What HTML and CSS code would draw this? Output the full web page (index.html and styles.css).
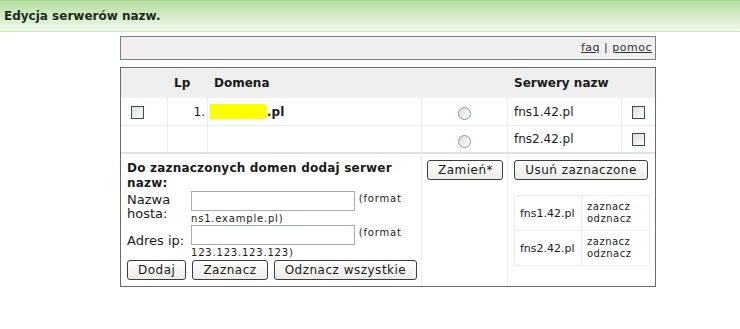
FILE: index.html
```html
<!DOCTYPE html>
<html lang="pl">
<head>
  <meta charset="UTF-8">
  <title>Edycja serwerów nazw</title>
  <link rel="stylesheet" href="styles.css">
</head>
<body>
  <div class="bar">
    <h1>Edycja serwerów nazw.</h1>
  </div>

  <div class="wrap">
    <div class="tools">
      <a href="#">faq</a> | <a href="#">pomoc</a>
    </div>

    <table class="dns">
      <tr class="head">
        <th class="c-chk"></th>
        <th class="c-lp">Lp</th>
        <th class="c-dom">Domena</th>
        <th class="c-rad"></th>
        <th class="c-srv">Serwery nazw</th>
        <th class="c-del"></th>
      </tr>
      <tr>
        <td class="first"><input type="checkbox" class="chk"></td>
        <td class="num">1.</td>
        <td class="domain"><span class="mask"></span><b>.pl</b></td>
        <td class="mid"><input type="radio" name="ns" class="rad"></td>
        <td>fns1.42.pl</td>
        <td class="mid end"><input type="checkbox" class="chk"></td>
      </tr>
      <tr class="last">
        <td></td>
        <td></td>
        <td></td>
        <td class="mid"><input type="radio" name="ns" class="rad"></td>
        <td>fns2.42.pl</td>
        <td class="mid end"><input type="checkbox" class="chk"></td>
      </tr>
      <tr class="actions">
        <td colspan="3" class="add">
          <div class="add-title">Do zaznaczonych domen dodaj serwer nazw:</div>
          <table class="form">
            <tr>
              <td class="lbl">Nazwa hosta:</td>
              <td><input type="text" class="txt"> <span class="hint">(format ns1.example.pl)</span></td>
            </tr>
            <tr>
              <td class="lbl">Adres ip:</td>
              <td><input type="text" class="txt"> <span class="hint">(format 123.123.123.123)</span></td>
            </tr>
          </table>
          <div class="btns">
            <button>Dodaj</button>
            <button>Zaznacz</button>
            <button>Odznacz wszystkie</button>
          </div>
        </td>
        <td class="swap"><button>Zamień*</button></td>
        <td colspan="2" class="remove end">
          <button>Usuń zaznaczone</button>
          <table class="pick">
            <tr>
              <td class="host">fns1.42.pl</td>
              <td class="links">zaznacz<br>odznacz</td>
            </tr>
            <tr>
              <td class="host">fns2.42.pl</td>
              <td class="links">zaznacz<br>odznacz</td>
            </tr>
          </table>
        </td>
      </tr>
    </table>
  </div>
</body>
</html>
```

FILE: styles.css
```css
body {
  margin: 0;
  padding: 0;
  font-family: "DejaVu Sans", Verdana, sans-serif;
  font-size: 12px;
  color: #1a1a1a;
  background: #ffffff;
}

.bar {
  height: 30px;
  border-top: 1px solid #a9d893;
  border-bottom: 1px solid #c9e6bb;
  background: linear-gradient(to bottom, #b6dea2, #f1f9ed);
}

.bar h1 {
  margin: 0;
  padding: 8px 0 0 4px;
  font-size: 12px;
  font-weight: bold;
  color: #1d2b1d;
}

.wrap {
  width: 536px;
  margin: 4px 0 0 120px;
}

.tools {
  height: 22px;
  line-height: 22px;
  border: 1px solid #6f8a6f;
  background: #f1eff2;
  text-align: right;
  padding-right: 3px;
  font-size: 11px;
  letter-spacing: 0.5px;
  color: #333;
}

.tools a {
  color: #333;
}

/* main table */
.dns {
  width: 536px;
  margin-top: 7px;
  border: 1px solid #6a6a6a;
  border-collapse: separate;
  border-spacing: 0;
  table-layout: fixed;
}

.dns th,
.dns td {
  box-sizing: border-box;
}

.dns th {
  height: 30px;
  padding: 0 6px;
  background: #efefef;
  text-align: left;
  font-size: 12px;
}

.dns td {
  height: 28px;
  padding: 0 6px;
  border-right: 1px solid #ececec;
  border-bottom: 1px solid #ececec;
  font-size: 12px;
}

.dns td.end {
  border-right: none;
}

.c-chk { width: 47px; }
.c-lp { width: 40px; }
.c-dom { width: 214px; }
.c-rad { width: 86px; }
.c-srv { width: 114px; }
.c-del { width: 33px; }

.dns td.first {
  padding-left: 10px;
}

.dns td.mid {
  text-align: center;
}

.dns td.num {
  text-align: right;
  padding-right: 2px;
}

.dns td.domain {
  padding-left: 2px;
}

.dns tr.last td {
  border-bottom: 2px solid #e2e2e2;
}

.mask {
  display: inline-block;
  width: 57px;
  height: 15px;
  vertical-align: -3px;
  background: #ffff00;
  border-radius: 0 4px 4px 0;
}

.chk {
  -webkit-appearance: none;
  appearance: none;
  width: 13px;
  height: 13px;
  margin: 0;
  border: 1px solid #2f4f5f;
  background: linear-gradient(135deg, #dcdcd6, #ffffff);
  vertical-align: middle;
}

.rad {
  -webkit-appearance: none;
  appearance: none;
  width: 13px;
  height: 13px;
  margin: 4px 0 0 0;
  border: 1px solid #8a9aa8;
  border-radius: 50%;
  background: linear-gradient(135deg, #dcdcd6, #ffffff);
  vertical-align: middle;
}

/* bottom row with forms */
.dns tr.actions > td {
  height: auto;
  vertical-align: top;
  border-bottom: none;
}

.dns td.add {
  padding: 7px 6px 6px 6px;
}

.add-title {
  font-weight: bold;
  letter-spacing: 0.2px;
  line-height: 15px;
}

.form {
  border-collapse: collapse;
}

.dns .form td {
  border: none;
  height: auto;
  padding: 0;
  vertical-align: middle;
  line-height: 14px;
}

.dns .form td.lbl {
  width: 64px;
  font-size: 13px;
  padding-bottom: 3px;
}

.txt {
  width: 158px;
  height: 16px;
  margin: 0;
  padding: 1px 2px;
  border: 1px solid #a5acb2;
  font-size: 11px;
  vertical-align: top;
}

.hint {
  font-size: 10px;
  letter-spacing: 0.8px;
  line-height: 13px;
}

.form tr + tr td {
  padding-top: 3px;
}

.btns {
  margin-top: 1px;
  display: flex;
  gap: 6px;
}

.btns button {
  flex: none;
}

button {
  font-family: "DejaVu Sans", Verdana, sans-serif;
  font-size: 12px;
  letter-spacing: 0.5px;
  white-space: nowrap;
  height: 20px;
  padding: 0 10px;
  color: #1a1a1a;
  border: 1px solid #3c3c3c;
  border-radius: 3px;
  background: linear-gradient(to bottom, #ffffff, #ecebe6);
}

.dns td.swap {
  padding: 6px 5px;
}

.swap button {
  width: 76px;
}

.dns td.remove {
  padding: 6px 6px;
}

.remove button {
  width: 134px;
}

.pick {
  margin-top: 15px;
  width: 136px;
  border-collapse: collapse;
}

.dns .actions .pick td {
  height: 35px;
  padding: 0 5px;
  border: 1px solid #ececec;
  vertical-align: middle;
}

.dns .actions .pick td.host {
  font-size: 11px;
  width: 67px;
}

.dns .actions .pick td.links {
  font-size: 10px;
  letter-spacing: 0.5px;
  line-height: 12px;
}
```
